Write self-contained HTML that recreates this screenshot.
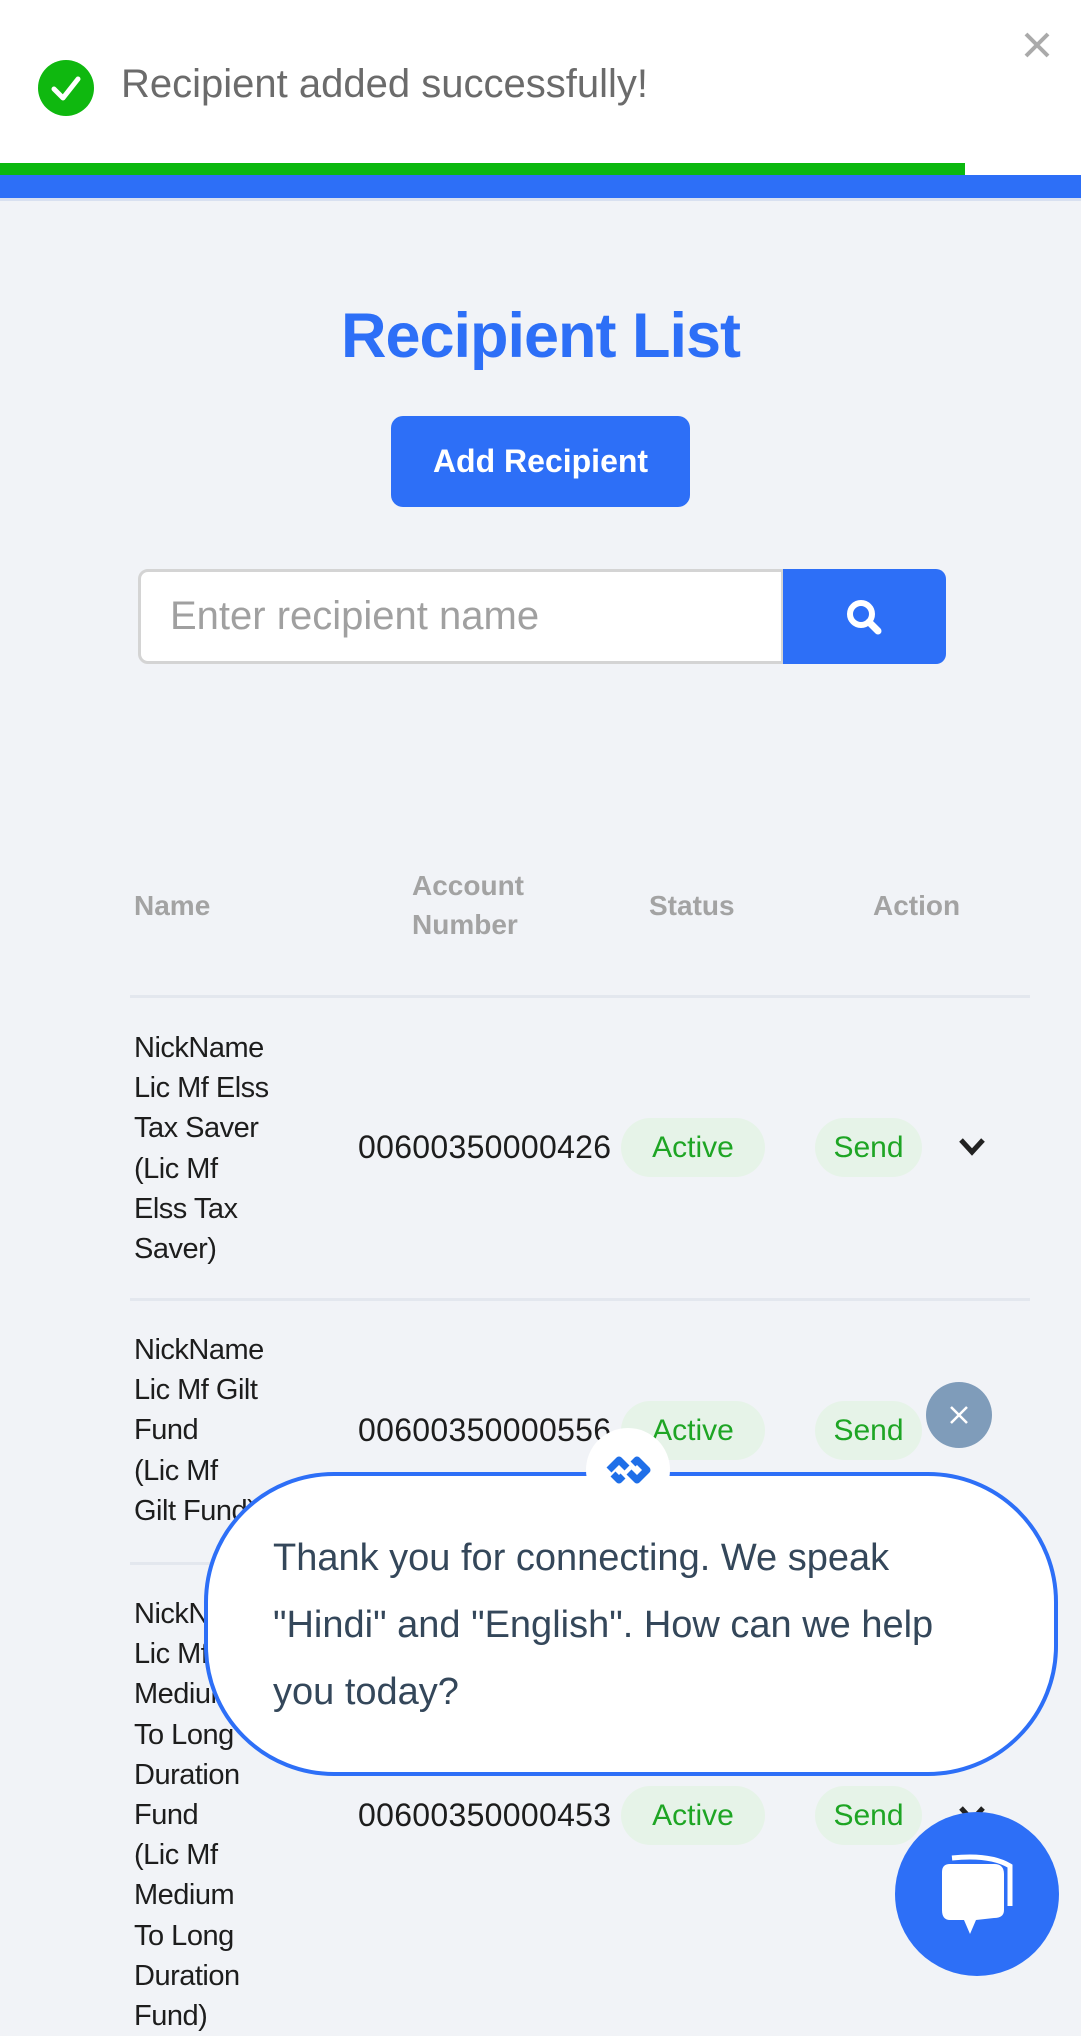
<!DOCTYPE html>
<html><head><meta charset="utf-8"><style>
*{margin:0;padding:0;box-sizing:border-box}
body{width:1081px;height:1999px;overflow:hidden;background:#f1f3f7;font-family:"Liberation Sans",sans-serif;position:relative}
.a{position:absolute}
.toast{left:0;top:0;width:1081px;height:175px;background:#fff}
.nm{left:134px;font-size:29px;line-height:40.2px;color:#1d1d1d;letter-spacing:-0.5px}
.hd{font-size:28px;font-weight:bold;color:#a3a3a3;line-height:39px}
.acct{left:358px;font-size:32px;color:#1d1d1d;line-height:36px;letter-spacing:0.3px}
.pill{background:#e6f3e8;color:#1ea524;font-size:30px;border-radius:30px;text-align:center;line-height:59px;height:59px}
.line{left:130px;width:900px;height:3px;background:#e3e7ee}
</style></head><body>
<div class="a toast"></div>
<div class="a" style="left:38px;top:60px;width:56px;height:56px;border-radius:50%;background:#0fb80f"></div>
<svg class="a" style="left:38px;top:60px" width="56" height="56"><path d="M16 29 L25 38 L40 19" stroke="#fff" stroke-width="5" fill="none" stroke-linecap="round" stroke-linejoin="round"/></svg>
<div class="a" style="left:121px;top:62px;font-size:40px;color:#6b6b6b">Recipient added successfully!</div>
<svg class="a" style="left:1023px;top:31px" width="28" height="28"><path d="M3 3L25 25M25 3L3 25" stroke="#aaa" stroke-width="4"/></svg>
<div class="a" style="left:0;top:163px;width:965px;height:12px;background:#0bb80f"></div>
<div class="a" style="left:0;top:175px;width:1081px;height:23px;background:#2d6ff7"></div>
<div class="a" style="left:0;top:198px;width:1081px;height:3px;background:#d8e0f0"></div>

<div class="a" style="left:0;top:300px;width:1081px;text-align:center;font-size:63px;font-weight:bold;color:#2d6ff7;letter-spacing:-1px">Recipient List</div>
<div class="a" style="left:391px;top:416px;width:299px;height:91px;border-radius:12px;background:#2d6ff7;color:#fff;font-size:32px;font-weight:bold;text-align:center;line-height:91px">Add Recipient</div>
<div class="a" style="left:138px;top:569px;width:646px;height:95px;border:3px solid #d4d4d4;border-radius:10px 0 0 10px;background:#fff"></div>
<div class="a" style="left:170px;top:594px;font-size:40px;color:#a0a0a0">Enter recipient name</div>
<div class="a" style="left:783px;top:569px;width:163px;height:95px;background:#2d6ff7;border-radius:0 10px 10px 0"></div>
<svg class="a" style="left:843px;top:596px" width="44" height="44"><circle cx="18" cy="18" r="11" stroke="#fff" stroke-width="6" fill="none"/><path d="M26 26L35 35" stroke="#fff" stroke-width="7" stroke-linecap="round"/></svg>

<div class="a hd" style="left:134px;top:886px">Name</div>
<div class="a hd" style="left:412px;top:866px">Account<br>Number</div>
<div class="a hd" style="left:649px;top:886px">Status</div>
<div class="a hd" style="left:873px;top:886px">Action</div>
<div class="a line" style="top:995px"></div>

<div class="a nm" style="top:1028px">NickName<br>Lic Mf Elss<br>Tax Saver<br>(Lic Mf<br>Elss Tax<br>Saver)</div>
<div class="a acct" style="top:1129px">00600350000426</div>
<div class="a pill" style="left:621px;top:1118px;width:144px">Active</div>
<div class="a pill" style="left:815px;top:1118px;width:107px">Send</div>
<svg class="a" style="left:957px;top:1136px" width="30" height="22"><path d="M4 4L15 16L26 4" stroke="#222" stroke-width="5" fill="none"/></svg>
<div class="a line" style="top:1298px"></div>

<div class="a nm" style="top:1330px">NickName<br>Lic Mf Gilt<br>Fund<br>(Lic Mf<br>Gilt Fund)</div>
<div class="a acct" style="top:1412px">00600350000556</div>
<div class="a pill" style="left:621px;top:1401px;width:144px">Active</div>
<div class="a pill" style="left:815px;top:1401px;width:107px">Send</div>
<div class="a line" style="top:1562px"></div>

<div class="a nm" style="top:1594px">NickName<br>Lic Mf<br>Medium<br>To Long<br>Duration<br>Fund<br>(Lic Mf<br>Medium<br>To Long<br>Duration<br>Fund)</div>
<div class="a acct" style="top:1797px">00600350000453</div>
<div class="a pill" style="left:621px;top:1786px;width:144px">Active</div>
<div class="a pill" style="left:815px;top:1786px;width:107px">Send</div>
<svg class="a" style="left:957px;top:1804px" width="30" height="22"><path d="M4 4L15 16L26 4" stroke="#222" stroke-width="5" fill="none"/></svg>

<div class="a" style="left:204px;top:1472px;width:854px;height:304px;border:4px solid #2d6ff7;border-radius:130px;background:#fff"></div>
<div class="a" style="left:273px;top:1525px;font-size:38px;line-height:67px;color:#34475a">Thank you for connecting. We speak<br>"Hindi" and "English". How can we help<br>you today?</div>
<div class="a" style="left:586px;top:1428px;width:84px;height:84px;border-radius:50%;background:#fff"></div>
<svg class="a" style="left:603px;top:1450px" width="50" height="40"><path d="M6 20L16 10L24 18M26 22L34 30L44 20L34 10L30 14M20 26L16 30L10 24" stroke="#1f6fe8" stroke-width="7" fill="none" stroke-linejoin="round"/></svg>
<div class="a" style="left:926px;top:1382px;width:66px;height:66px;border-radius:50%;background:#7f9cba"></div>
<svg class="a" style="left:949px;top:1405px" width="20" height="20"><path d="M2 2L18 18M18 2L2 18" stroke="#fff" stroke-width="2.5"/></svg>
<div class="a" style="left:895px;top:1812px;width:164px;height:164px;border-radius:50%;background:#2d6ff7"></div>
<svg class="a" style="left:930px;top:1850px" width="90" height="90"><path d="M22 8 Q60 4 80 16 L80 56" stroke="#fff" stroke-width="5" fill="none"/><path d="M12 22 Q12 14 20 14 L64 14 Q74 14 74 24 L74 60 Q74 68 64 68 L46 70 L40 84 L34 70 L20 70 Q12 70 12 60 Z" fill="#fff"/></svg>
</body></html>
